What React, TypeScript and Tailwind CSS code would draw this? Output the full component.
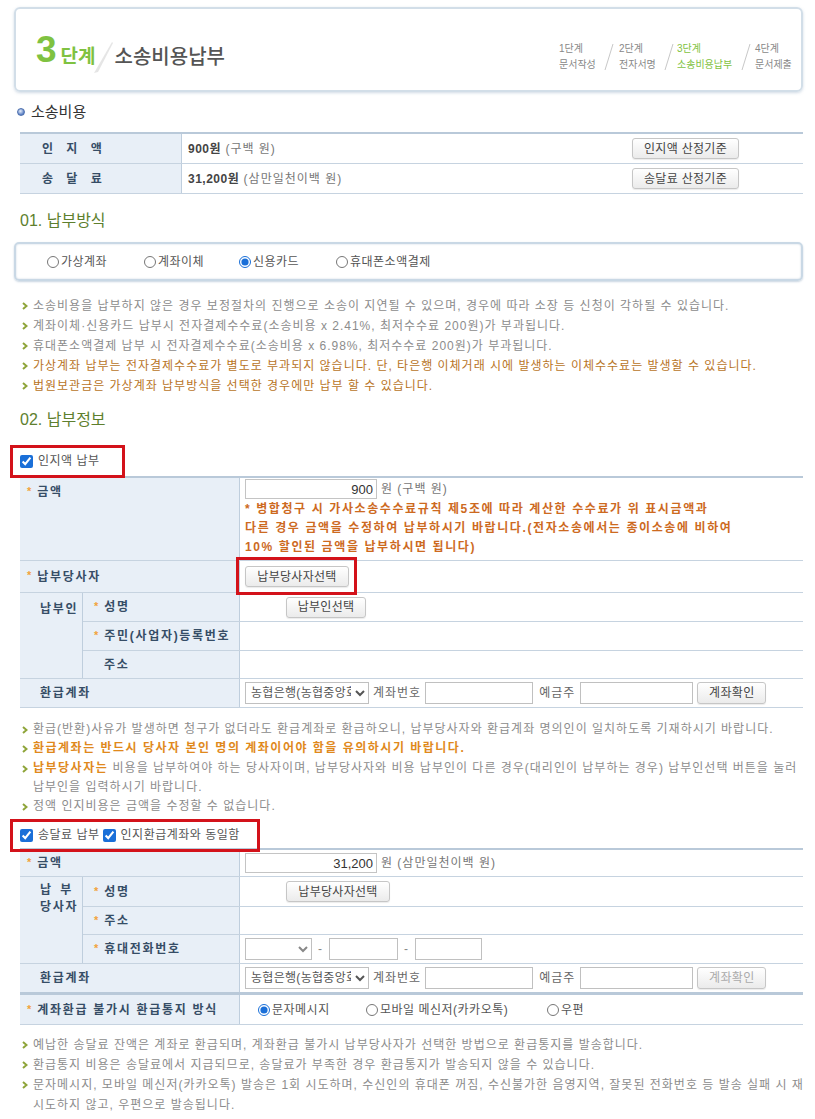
import React from 'react';

// bullet arrow used before every note line
const Arrow = () => (
  <svg width="6" height="8" viewBox="0 0 6 8" className="shrink-0 mt-[6px] mr-[5px]">
    <path d="M1 1 L4.5 4 L1 7" stroke="#8fa53a" strokeWidth="2" fill="none" />
  </svg>
);

const Note = ({ children, tone = 'gray' }: { children: React.ReactNode; tone?: 'gray' | 'brown' | 'orange' }) => {
  const color =
    tone === 'brown'
      ? 'text-[#b8741f]'
      : tone === 'orange'
      ? 'text-[#e0891c] font-bold tracking-[1.5px]'
      : 'text-[#8c8c8c]';
  return (
    <div className="flex pl-[2px]">
      <Arrow />
      <div className={color}>{children}</div>
    </div>
  );
};

const Star = () => <span className="text-[#f2a23a] text-[11px] mr-[6px] relative top-[-1px] tracking-normal">*</span>;

const Btn = ({ children, disabled, className = '' }: { children: React.ReactNode; disabled?: boolean; className?: string }) => (
  <button
    className={`h-[21px] px-[10px] border border-[#c6c6c6] rounded-[3px] bg-linear-to-b from-white to-[#ebebeb] text-[12px] leading-none tracking-[0.3px] shadow-[0_1px_1px_rgba(0,0,0,0.08)] ${
      disabled ? 'text-[#aaa]' : 'text-[#444]'
    } ${className}`}
  >
    {children}
  </button>
);

const Radio = ({ label, checked, name }: { label: string; checked?: boolean; name: string }) => (
  <label className="flex items-center gap-[2px] text-[12px] text-[#555] tracking-[0.5px]">
    <input type="radio" name={name} defaultChecked={checked} className="w-[12px] h-[12px] m-0 accent-[#1a6fd8]" />
    <span>{label}</span>
  </label>
);

const Slash = ({ color = '#c8c8c8' }: { color?: string }) => (
  <svg width="10" height="28" viewBox="0 0 10 28" className="shrink-0">
    <line x1="9" y1="1" x2="1" y2="27" stroke={color} strokeWidth="1" />
  </svg>
);

const labelCls = 'bg-[#e8eff7] border-r border-[#bfcedd] text-[#364d66] font-bold text-[12px] tracking-[1.7px] whitespace-nowrap';
const rowCls = 'flex border-b border-[#c6d3e0]';

const AccountRow = ({ disabledBtn }: { disabledBtn?: boolean }) => (
  <div className={`${rowCls} h-[29px]`}>
    <div className={`${labelCls} w-[220px] flex items-center pl-[20px]`}>환급계좌</div>
    <div className="flex-1 flex items-center pl-[5px] text-[12px] text-[#666]">
      <select className="h-[22px] w-[124px] border border-[#c0c0c0] bg-white text-[12px] text-[#555] px-[1px] tracking-[0.3px]">
        <option>농협은행(농협중앙회)</option>
      </select>
      <span className="ml-[4px]">계좌번호</span>
      <input className="ml-[4px] h-[22px] w-[108px] border border-[#c0c0c0]" />
      <span className="ml-[6px]">예금주</span>
      <input className="ml-[5px] h-[22px] w-[113px] border border-[#c0c0c0]" />
      <Btn disabled={disabledBtn} className="ml-[4px] h-[22px] w-[69px] px-0">
        계좌확인
      </Btn>
    </div>
  </div>
);

export default function App() {
  return (
    <div className="w-[815px] bg-white pl-[20px] pr-[12px] pt-[7px] pb-[12px] font-['Liberation_Sans','Noto_Sans_CJK_KR',sans-serif] text-[12px] tracking-[1px]">
      {/* step header */}
      <div className="-ml-[6px] h-[85px] border-2 border-[#d2dee8] rounded-[6px] shadow-[0_1px_3px_rgba(120,150,180,0.35)] flex items-center justify-between pl-[20px] pr-[6px]">
        <div className="flex items-end tracking-normal">
          <span className="text-[37px] leading-none font-bold text-[#7fc241]">3</span>
          <span className="ml-[4px] mb-[2px] text-[19px] leading-none font-bold text-[#7fc241]">단계</span>
          <svg width="22" height="34" viewBox="0 0 22 34" className="-ml-[4px] mb-[-6px]">
            <defs>
              <linearGradient id="sl" x1="0" y1="0" x2="1" y2="1">
                <stop offset="0" stopColor="#f4f4f4" />
                <stop offset="1" stopColor="#d8d8d8" />
              </linearGradient>
            </defs>
            <polygon points="20,2 21,3 6,32 2,33" fill="url(#sl)" />
          </svg>
          <span className="ml-[1px] mb-[1px] text-[20px] leading-none font-medium text-[#555]">소송비용납부</span>
        </div>
        <div className="mt-[14px] flex items-center gap-[2px] text-[10px] leading-[16px] text-[#888] tracking-normal">
          <div className="w-[43px]">
            <div>1단계</div>
            <div>문서작성</div>
          </div>
          <Slash />
          <div className="w-[46px] pl-[3px]">
            <div>2단계</div>
            <div>전자서명</div>
          </div>
          <Slash />
          <div className="w-[63px] pl-[1px] text-[#7fc241]">
            <div>3단계</div>
            <div>소송비용납부</div>
          </div>
          <Slash />
          <div className="w-[42px] pl-[2px]">
            <div>4단계</div>
            <div>문서제출</div>
          </div>
        </div>
      </div>

      {/* 소송비용 */}
      <div className="mt-[10px] flex items-center h-[20px] -ml-[3px]">
        <span className="w-[8px] h-[8px] rounded-full bg-[radial-gradient(circle_at_40%_35%,#e6eef9,#5a7fc4_70%)] border border-[#4c6fae]" />
        <span className="ml-[6px] text-[15px] text-[#333] tracking-normal">소송비용</span>
      </div>
      <div className="mt-[10px] border-t-2 border-[#b9c9d9]">
        <div className={`${rowCls} h-[30px]`}>
          <div className={`${labelCls} w-[162px] flex items-center pl-[22px] tracking-[5px]`}>인 지 액</div>
          <div className="flex-1 flex items-center justify-between pl-[6px] pr-[64px]">
            <span className="text-[#444]">
              <b className="font-bold tracking-[0.5px]">900원</b> <span className="text-[#777]">(구백 원)</span>
            </span>
            <Btn className="w-[107px] px-0">인지액 산정기준</Btn>
          </div>
        </div>
        <div className={`${rowCls} h-[30px]`}>
          <div className={`${labelCls} w-[162px] flex items-center pl-[22px] tracking-[5px]`}>송 달 료</div>
          <div className="flex-1 flex items-center justify-between pl-[6px] pr-[64px]">
            <span className="text-[#444]">
              <b className="font-bold tracking-[0.5px]">31,200원</b> <span className="text-[#777]">(삼만일천이백 원)</span>
            </span>
            <Btn className="w-[107px] px-0">송달료 산정기준</Btn>
          </div>
        </div>
      </div>

      {/* 01. 납부방식 */}
      <div className="mt-[17px] text-[16px] leading-[20px] text-[#5e7f2e] tracking-normal">01. 납부방식</div>
      <div className="mt-[11px] -ml-[6px] h-[39px] border-2 border-[#c9d8e5] rounded-[5px] shadow-[inset_0_0_2px_rgba(120,150,180,0.4),0_1px_2px_rgba(120,150,180,0.4)] flex items-center pl-[31px]">
        <div className="w-[97px]">
          <Radio name="pay" label="가상계좌" />
        </div>
        <div className="w-[95px]">
          <Radio name="pay" label="계좌이체" />
        </div>
        <div className="w-[97px]">
          <Radio name="pay" label="신용카드" checked />
        </div>
        <Radio name="pay" label="휴대폰소액결제" />
      </div>

      <div className="mt-[15px] leading-[20px]">
        <Note>소송비용을 납부하지 않은 경우 보정절차의 진행으로 소송이 지연될 수 있으며, 경우에 따라 소장 등 신청이 각하될 수 있습니다.</Note>
        <Note>계좌이체·신용카드 납부시 전자결제수수료(소송비용 x 2.41%, 최저수수료 200원)가 부과됩니다.</Note>
        <Note>휴대폰소액결제 납부 시 전자결제수수료(소송비용 x 6.98%, 최저수수료 200원)가 부과됩니다.</Note>
        <Note tone="brown">가상계좌 납부는 전자결제수수료가 별도로 부과되지 않습니다. 단, 타은행 이체거래 시에 발생하는 이체수수료는 발생할 수 있습니다.</Note>
        <Note tone="brown">법원보관금은 가상계좌 납부방식을 선택한 경우에만 납부 할 수 있습니다.</Note>
      </div>

      {/* 02. 납부정보 */}
      <div className="mt-[14px] text-[16px] leading-[20px] text-[#5e7f2e] tracking-normal">02. 납부정보</div>

      <div className="relative mt-[19px] h-[24px] flex items-center">
        <input type="checkbox" defaultChecked className="w-[13px] h-[13px] m-0 accent-[#1a6fd8]" />
        <span className="ml-[5px] text-[#555] tracking-[0.5px]">인지액 납부</span>
        <div className="absolute -left-[10px] -top-[4px] w-[115px] h-[33px] border-[3px] border-[#d3121a]" />
      </div>

      <div className="mt-[3px] border-t-2 border-[#b9c9d9]">
        <div className={`${rowCls} h-[83px]`}>
          <div className={`${labelCls} w-[220px] pl-[7px] pt-[5px]`}>
            <Star />
            금액
          </div>
          <div className="flex-1 pl-[5px] pt-[1px]">
            <div className="flex items-center">
              <input
                defaultValue="900"
                className="h-[20px] w-[132px] border border-[#c4c4c4] text-right pr-[3px] text-[13px] text-[#333] tracking-normal"
              />
              <span className="ml-[4px] text-[#777]">원 (구백 원)</span>
            </div>
            <div className="mt-[1px] text-[#cd6a1f] font-bold leading-[19px] tracking-[1.6px] whitespace-nowrap">
              * 병합청구 시 가사소송수수료규칙 제5조에 따라 계산한 수수료가 위 표시금액과
              <br />
              다른 경우 금액을 수정하여 납부하시기 바랍니다.(전자소송에서는 종이소송에 비하여
              <br />
              10% 할인된 금액을 납부하시면 됩니다)
            </div>
          </div>
        </div>
        <div className={`${rowCls} h-[32px]`}>
          <div className={`${labelCls} w-[220px] flex items-center pl-[7px]`}>
            <Star />
            납부당사자
          </div>
          <div className="flex-1 flex items-center pl-[5px]">
            <div className="relative">
              <Btn className="w-[104px] px-0">납부당사자선택</Btn>
              <div className="absolute -left-[9px] -top-[9px] w-[121px] h-[38px] border-[3px] border-[#d3121a]" />
            </div>
          </div>
        </div>
        <div className="flex border-b border-[#c6d3e0]">
          <div className={`${labelCls} w-[63px] pl-[20px] pt-[7px]`}>납부인</div>
          <div className="flex-1">
            <div className={`${rowCls} h-[29px]`}>
              <div className={`${labelCls} w-[157px] flex items-center pl-[11px]`}>
                <Star />
                성명
              </div>
              <div className="flex-1 flex items-center pl-[46px]">
                <Btn className="w-[80px] px-0">납부인선택</Btn>
              </div>
            </div>
            <div className={`${rowCls} h-[29px]`}>
              <div className={`${labelCls} w-[157px] flex items-center pl-[11px]`}>
                <Star />
                주민(사업자)등록번호
              </div>
              <div className="flex-1" />
            </div>
            <div className="flex h-[27px]">
              <div className={`${labelCls} w-[157px] flex items-center pl-[21px]`}>주소</div>
              <div className="flex-1" />
            </div>
          </div>
        </div>
        <AccountRow />
      </div>

      <div className="mt-[12px] leading-[19.3px]">
        <Note>환급(반환)사유가 발생하면 청구가 없더라도 환급계좌로 환급하오니, 납부당사자와 환급계좌 명의인이 일치하도록 기재하시기 바랍니다.</Note>
        <Note tone="orange">환급계좌는 반드시 당사자 본인 명의 계좌이어야 함을 유의하시기 바랍니다.</Note>
        <Note>
          <span className="text-[#e0891c] font-bold tracking-[1.5px]">납부당사자는</span> 비용을 납부하여야 하는 당사자이며, 납부당사자와 비용 납부인이 다른 경우(대리인이 납부하는 경우) 납부인선택 버튼을 눌러 납부인을 입력하시기 바랍니다.
        </Note>
        <Note>정액 인지비용은 금액을 수정할 수 없습니다.</Note>
      </div>

      <div className="relative mt-[7px] h-[24px] flex items-center">
        <input type="checkbox" defaultChecked className="w-[13px] h-[13px] m-0 accent-[#1a6fd8]" />
        <span className="ml-[5px] text-[#555] tracking-[0.5px]">송달료 납부</span>
        <input type="checkbox" defaultChecked className="ml-[3px] w-[13px] h-[13px] m-0 accent-[#1a6fd8]" />
        <span className="ml-[5px] text-[#555] tracking-[0.5px]">인지환급계좌와 동일함</span>
        <div className="absolute -left-[10px] -top-[4px] w-[250px] h-[33px] border-[3px] border-[#d3121a]" />
      </div>

      <div className="mt-[1px] border-t-2 border-[#b9c9d9]">
        <div className={`${rowCls} h-[27px]`}>
          <div className={`${labelCls} w-[220px] flex items-center pl-[7px]`}>
            <Star />
            금액
          </div>
          <div className="flex-1 flex items-center pl-[5px]">
            <input
              defaultValue="31,200"
              className="h-[20px] w-[132px] border border-[#c4c4c4] text-right pr-[3px] text-[13px] text-[#333] tracking-normal"
            />
            <span className="ml-[4px] text-[#777]">원 (삼만일천이백 원)</span>
          </div>
        </div>
        <div className="flex border-b border-[#c6d3e0]">
          <div className={`${labelCls} w-[63px] pl-[20px] pt-[5px] leading-[17px]`}>
            <div className="tracking-[3px]">납 부</div>
            <div>당사자</div>
          </div>
          <div className="flex-1">
            <div className={`${rowCls} h-[30px]`}>
              <div className={`${labelCls} w-[157px] flex items-center pl-[11px]`}>
                <Star />
                성명
              </div>
              <div className="flex-1 flex items-center pl-[46px]">
                <Btn className="w-[104px] px-0">납부당사자선택</Btn>
              </div>
            </div>
            <div className={`${rowCls} h-[28px]`}>
              <div className={`${labelCls} w-[157px] flex items-center pl-[11px]`}>
                <Star />
                주소
              </div>
              <div className="flex-1" />
            </div>
            <div className="flex h-[28px]">
              <div className={`${labelCls} w-[157px] flex items-center pl-[11px]`}>
                <Star />
                휴대전화번호
              </div>
              <div className="flex-1 flex items-center pl-[5px] text-[#888]">
                <select className="h-[22px] w-[67px] border border-[#c0c0c0] bg-white">
                  <option></option>
                </select>
                <span className="ml-[6px]">-</span>
                <input className="ml-[6px] h-[22px] w-[69px] border border-[#c0c0c0]" />
                <span className="ml-[6px]">-</span>
                <input className="ml-[6px] h-[22px] w-[67px] border border-[#c0c0c0]" />
              </div>
            </div>
          </div>
        </div>
        <AccountRow disabledBtn />
        <div className="flex h-[33px] border-t-[3px] border-[#b9c9d9] border-b border-b-[#c6d3e0] -mt-[1px]">
          <div className={`${labelCls} w-[220px] flex items-center pl-[7px]`}>
            <Star />
            계좌환급 불가시 환급통지 방식
          </div>
          <div className="flex-1 flex items-center pl-[18px]">
            <div className="w-[108px]">
              <Radio name="notice" label="문자메시지" checked />
            </div>
            <div className="w-[181px]">
              <Radio name="notice" label="모바일 메신저(카카오톡)" />
            </div>
            <Radio name="notice" label="우편" />
          </div>
        </div>
      </div>

      <div className="mt-[10px] leading-[20px] -mr-[12px]">
        <Note>예납한 송달료 잔액은 계좌로 환급되며, 계좌환급 불가시 납부당사자가 선택한 방법으로 환급통지를 발송합니다.</Note>
        <Note>환급통지 비용은 송달료에서 지급되므로, 송달료가 부족한 경우 환급통지가 발송되지 않을 수 있습니다.</Note>
        <Note>
          <span className="whitespace-nowrap">
            문자메시지, 모바일 메신저(카카오톡) 발송은 1회 시도하며, 수신인의 휴대폰 꺼짐, 수신불가한 음영지역, 잘못된 전화번호 등 발송 실패 시 재
          </span>
          <br />
          시도하지 않고, 우편으로 발송됩니다.
        </Note>
      </div>
    </div>
  );
}
